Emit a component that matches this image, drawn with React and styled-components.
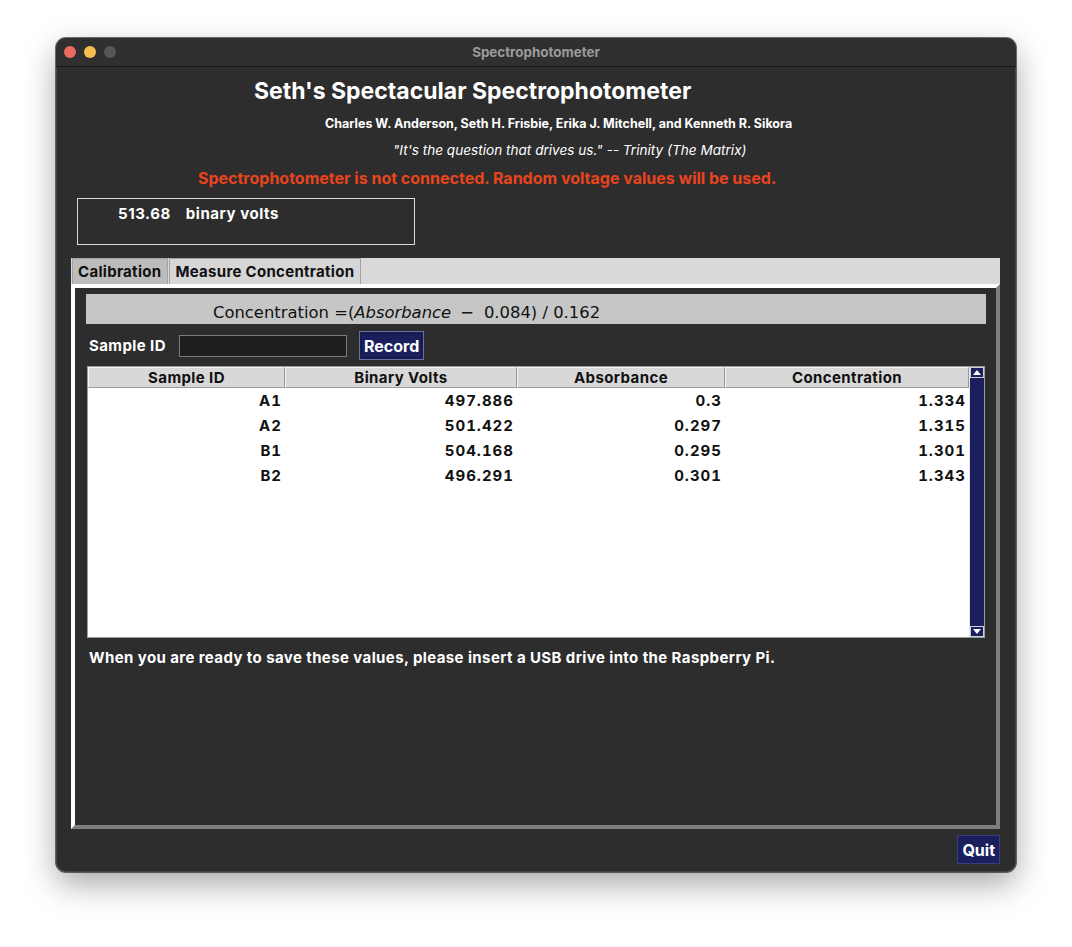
import React from "react";
import styled, { createGlobalStyle } from "styled-components";

const GlobalStyle = createGlobalStyle`
  html, body { margin: 0; padding: 0; background: #ffffff; }
  body { font-family: Inter, "Liberation Sans", Arial, sans-serif; }
  * { box-sizing: border-box; }
`;

const Page = styled.div`
  width: 1072px;
  height: 947px;
  padding: 38px 0 0 56px;
  background: #ffffff;
`;

const Window = styled.div`
  width: 960px;
  height: 834px;
  border-radius: 10px;
  background: #2d2d2d;
  box-shadow: 0 0 0 1px rgba(0, 0, 0, 0.55), inset 0 0 0 1px rgba(255, 255, 255, 0.1),
    0 12px 32px rgba(0, 0, 0, 0.35);
  display: flex;
  flex-direction: column;
  overflow: hidden;
`;

const TitleBar = styled.div`
  height: 29px;
  flex: none;
  display: grid;
  grid-template-columns: 1fr auto 1fr;
  align-items: center;
  background: #2f2f2f;
  border-bottom: 1px solid #151515;
`;

const Lights = styled.div`
  display: flex;
  gap: 8px;
  padding-left: 8px;
`;

const Light = styled.span`
  width: 12px;
  height: 12px;
  border-radius: 50%;
  background: ${(p) => p.$c};
`;

const WindowTitle = styled.div`
  font-size: 13.4px;
  font-weight: 700;
  color: #9b9b9b;
`;

const Body = styled.div`
  flex: 1;
  display: flex;
  flex-direction: column;
  padding: 0 16px 8px 15px;
`;

const TextRow = styled.div`
  margin-top: ${(p) => p.$mt}px;
  height: ${(p) => p.$h}px;
  line-height: ${(p) => p.$h}px;
  padding-left: ${(p) => p.$indent}px;
  font-size: ${(p) => p.$size}px;
  letter-spacing: ${(p) => p.$ls || 0}px;
  font-weight: ${(p) => (p.$italic ? 400 : 700)};
  font-style: ${(p) => (p.$italic ? "italic" : "normal")};
  color: ${(p) => p.$color || "#ffffff"};
  white-space: nowrap;
`;

const VoltBox = styled.div`
  margin: 10px 0 0 6px;
  width: 338px;
  height: 47px;
  border: 1px solid #dcdcdc;
  display: flex;
  gap: 15px;
  padding: 6px 0 0 40px;
  color: #ffffff;
  font-size: 15px;
  letter-spacing: 0.55px;
  font-weight: 700;
  line-height: 18px;
`;

const Notebook = styled.div`
  margin-top: 13px;
  display: flex;
  flex-direction: column;
`;

const TabStrip = styled.div`
  height: 26px;
  background: #d9d9d9;
  display: flex;
  align-items: stretch;
  padding-left: 1px;
`;

const Tab = styled.div`
  padding: 0 6px 0 5px;
  font-size: 15px;
  letter-spacing: 0.3px;
  font-weight: 700;
  color: #111111;
  display: flex;
  align-items: center;
  background: ${(p) => (p.$active ? "#d6d6d6" : "#bcbcbc")};
  border: 1px solid #a3a3a3;
  border-bottom: none;
  margin-right: 1px;
`;

const Panel = styled.div`
  height: 545px;
  border-style: solid;
  border-width: 4px;
  border-color: #ffffff #7e7e7e #7e7e7e #ffffff;
  background: #2d2d2d;
  display: flex;
  flex-direction: column;
`;

const FormulaBar = styled.div`
  margin: 6px 10px 0 11px;
  height: 30px;
  background: #c6c6c6;
  padding: 4px 0 0 127px;
  font-family: "DejaVu Sans", sans-serif;
  font-size: 16.4px;
  line-height: 30px;
  color: #111111;
  white-space: nowrap;
`;

const Ital = styled.span`
  font-style: italic;
`;

const MathOp = styled.span`
  margin: 0 10px 0 9px;
`;

const EntryRow = styled.div`
  margin-top: 7px;
  height: 29px;
  display: flex;
  align-items: center;
  padding-left: 14px;
`;

const Label = styled.span`
  width: 90px;
  color: #ffffff;
  font-size: 15px;
  letter-spacing: 0.4px;
  font-weight: 700;
`;

const Entry = styled.div`
  width: 168px;
  height: 22px;
  background: #1e1e1e;
  border: 1px solid #7a7a7a;
`;

const NavyButton = styled.div`
  margin-left: ${(p) => p.$ml || 0}px;
  height: 29px;
  padding: 0 ${(p) => p.$px}px;
  background: #1b1f5e;
  border: 1px solid ${(p) => (p.$focus ? "#6a6f9a" : "#3a3f78")};
  outline: ${(p) => (p.$focus ? "1px dotted #0b0d2a" : "none")};
  outline-offset: -3px;
  color: #ffffff;
  font-size: 16px;
  font-weight: 700;
  display: flex;
  align-items: center;
`;

const Table = styled.div`
  margin: 6px 11px 0 12px;
  height: 272px;
  border: 1px solid #9c9c9c;
  background: #ffffff;
  display: flex;
`;

const TableMain = styled.div`
  flex: 1;
  display: flex;
  flex-direction: column;
`;

const Grid = styled.div`
  display: grid;
  grid-template-columns: 197px 232px 208px 1fr;
`;

const HeadCell = styled.div`
  height: 21px;
  background: #d8d8d8;
  border-top: 1px solid #f4f4f4;
  border-left: 1px solid #f4f4f4;
  border-right: 1px solid #9a9a9a;
  border-bottom: 1px solid #9a9a9a;
  text-align: center;
  font-size: 15px;
  letter-spacing: 0.4px;
  font-weight: 700;
  line-height: 19px;
  color: #111111;
`;

const Cell = styled.div`
  height: 25px;
  line-height: 25px;
  text-align: right;
  padding-right: 3px;
  font-size: 15px;
  letter-spacing: 1px;
  font-feature-settings: "tnum";
  font-weight: 700;
  color: #111111;
`;

const ScrollBar = styled.div`
  width: 15px;
  background: #1b1f5e;
  border-left: 1px solid #e8e8e8;
  display: flex;
  flex-direction: column;
  justify-content: space-between;
`;

const Arrow = styled.div`
  height: 11px;
  border: 1px solid #cfcfd8;
  display: flex;
  align-items: center;
  justify-content: center;
`;

const QuitRow = styled.div`
  margin-top: 6px;
  display: flex;
  justify-content: flex-end;
`;

const rows = [
  ["A1", "497.886", "0.3", "1.334"],
  ["A2", "501.422", "0.297", "1.315"],
  ["B1", "504.168", "0.295", "1.301"],
  ["B2", "496.291", "0.301", "1.343"],
];

const Tri = ({ down }) => (
  <svg width="8" height="5" viewBox="0 0 8 5">
    <polygon points={down ? "0,0 8,0 4,5" : "0,5 8,5 4,0"} fill="#ffffff" />
  </svg>
);

export default function App() {
  return (
    <>
      <GlobalStyle />
      <Page>
        <Window>
          <TitleBar>
            <Lights>
              <Light $c="#ec6a5e" />
              <Light $c="#f4bf4f" />
              <Light $c="#575757" />
            </Lights>
            <WindowTitle>Spectrophotometer</WindowTitle>
            <div />
          </TitleBar>
          <Body>
            <TextRow $mt={8} $h={32} $indent={183} $size={23}>
              Seth's Spectacular Spectrophotometer
            </TextRow>
            <TextRow $mt={7} $h={20} $indent={254} $size={12.5}>
              Charles W. Anderson, Seth H. Frisbie, Erika J. Mitchell, and Kenneth R. Sikora
            </TextRow>
            <TextRow $mt={6} $h={20} $indent={322} $size={13.6} $italic>
              "It's the question that drives us." -- Trinity (The Matrix)
            </TextRow>
            <TextRow $mt={8} $h={20} $indent={127} $size={16} $color="#e8441e">
              Spectrophotometer is not connected. Random voltage values will be used.
            </TextRow>
            <VoltBox>
              <span>513.68</span>
              <span>binary volts</span>
            </VoltBox>
            <Notebook>
              <TabStrip>
                <Tab>Calibration</Tab>
                <Tab $active>Measure Concentration</Tab>
              </TabStrip>
              <Panel>
                <FormulaBar>
                  Concentration =(<Ital>Absorbance</Ital>
                  <MathOp>−</MathOp>0.084) / 0.162
                </FormulaBar>
                <EntryRow>
                  <Label>Sample ID</Label>
                  <Entry />
                  <NavyButton $ml={12} $px={4} $focus>
                    Record
                  </NavyButton>
                </EntryRow>
                <Table>
                  <TableMain>
                    <Grid>
                      <HeadCell>Sample ID</HeadCell>
                      <HeadCell>Binary Volts</HeadCell>
                      <HeadCell>Absorbance</HeadCell>
                      <HeadCell>Concentration</HeadCell>
                      {rows.map((r) =>
                        r.map((v, i) => <Cell key={r[0] + i}>{v}</Cell>)
                      )}
                    </Grid>
                  </TableMain>
                  <ScrollBar>
                    <Arrow>
                      <Tri />
                    </Arrow>
                    <Arrow>
                      <Tri down />
                    </Arrow>
                  </ScrollBar>
                </Table>
                <TextRow $mt={10} $h={20} $indent={14} $size={15} $ls={0.4}>
                  When you are ready to save these values, please insert a USB drive into the Raspberry Pi.
                </TextRow>
              </Panel>
              <QuitRow>
                <NavyButton $px={4}>Quit</NavyButton>
              </QuitRow>
            </Notebook>
          </Body>
        </Window>
      </Page>
    </>
  );
}
